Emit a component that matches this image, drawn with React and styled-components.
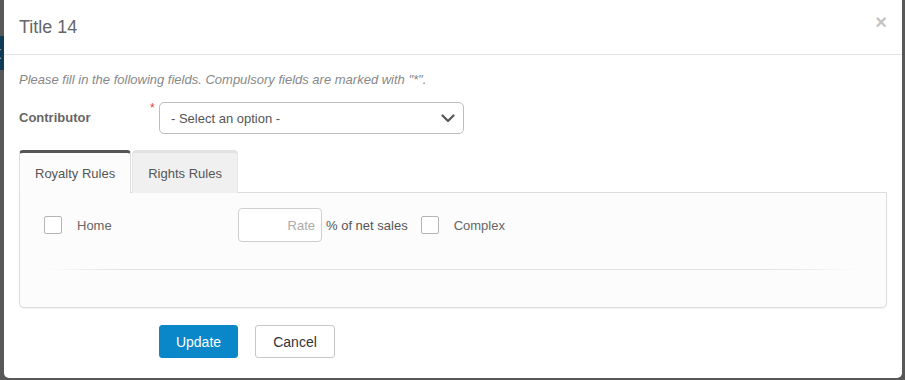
import React from "react";
import styled, { createGlobalStyle } from "styled-components";

const GlobalStyle = createGlobalStyle`
  html, body { margin: 0; padding: 0; background: #595959; }
  body { font-family: "Liberation Sans", Arial, sans-serif; }
`;

const Page = styled.div`
  display: flex;
  width: 905px;
  height: 380px;
  background: #585858;
  overflow: hidden;
`;

const Gutter = styled.div`
  width: 4px;
  flex: none;
  padding-top: 36px;
`;

const BehindBlock = styled.div`
  height: 34px;
  background: #0d3b58;
  color: #9fb3c2;
  font-size: 18px;
  line-height: 34px;
  overflow: hidden;
  text-indent: -4px;
`;

const Modal = styled.div`
  width: 898px;
  height: 378px;
  flex: none;
  background: #fff;
  border-radius: 0 0 5px 5px;
  display: flex;
  flex-direction: column;
`;

const Header = styled.div`
  height: 54px;
  border-bottom: 1px solid #e5e5e5;
  display: flex;
  align-items: center;
  justify-content: space-between;
  padding: 0 15px;
`;

const Title = styled.h3`
  margin: 0;
  font-size: 18px;
  font-weight: normal;
  color: #666;
  padding-top: 1px;
`;

const Close = styled.span`
  font-size: 20px;
  font-weight: bold;
  color: #c4c4c4;
  line-height: 1;
  margin-top: -10px;
`;

const Body = styled.div`
  padding: 17px 15px 0 15px;
`;

const Intro = styled.p`
  margin: 0;
  font-size: 13px;
  font-style: italic;
  color: #888;
  line-height: 16px;
`;

const FieldRow = styled.div`
  display: flex;
  align-items: center;
  margin-top: 14px;
`;

const Label = styled.label`
  width: 131px;
  font-size: 13px;
  font-weight: bold;
  color: #666;
  margin-top: -2px;
`;

const Required = styled.span`
  width: 9px;
  align-self: flex-start;
  color: #e23b3b;
  font-size: 12px;
  margin-top: -1px;
`;

const Select = styled.div`
  width: 284px;
  height: 30px;
  border: 1px solid #bdbdbd;
  border-radius: 5px;
  display: flex;
  align-items: center;
  justify-content: space-between;
  padding: 0 8px 0 11px;
  font-size: 13px;
  color: #555;
`;

const Tabs = styled.div`
  display: flex;
  margin-top: 16px;
  align-items: flex-end;
`;

const Tab = styled.div`
  height: 40px;
  padding: 0 15px;
  display: flex;
  align-items: center;
  font-size: 13px;
  color: #555;
  border-top: 3px solid ${({ $active }) => ($active ? "#555" : "#e2e2e2")};
  border-left: 1px solid ${({ $active }) => ($active ? "#ddd" : "#e6e6e6")};
  border-right: 1px solid ${({ $active }) => ($active ? "#ddd" : "#e6e6e6")};
  border-radius: 4px 4px 0 0;
  background: ${({ $active }) => ($active ? "#fcfcfc" : "#f0f0f0")};
  margin-right: 1px;
  margin-bottom: -1px;
  position: relative;
`;

const Panel = styled.div`
  box-sizing: border-box;
  height: 116px;
  border: 1px solid #dcdcdc;
  border-radius: 0 0 5px 5px;
  background: #fcfcfc;
  padding: 15px 24px 0 24px;
  box-shadow: 0 1px 1px rgba(0, 0, 0, 0.05);
`;

const RuleRow = styled.div`
  display: flex;
  align-items: center;
  height: 34px;
`;

const Checkbox = styled.span`
  width: 16px;
  height: 16px;
  border: 1px solid #b5b5b5;
  border-radius: 2px;
  background: #fff;
  flex: none;
`;

const CheckLabel = styled.span`
  font-size: 13px;
  color: #666;
  margin-left: 15px;
  width: ${({ $w }) => $w}px;
`;

const RateInput = styled.div`
  width: 76px;
  height: 32px;
  border: 1px solid #cfcfcf;
  border-radius: 4px;
  background: #fff;
  display: flex;
  align-items: center;
  justify-content: flex-end;
  padding-right: 6px;
  font-size: 13px;
  color: #aaa;
`;

const Unit = styled.span`
  font-size: 13px;
  color: #555;
  margin: 0 13px 0 4px;
`;

const Divider = styled.div`
  height: 1px;
  margin: 27px 0 0 0;
  background: linear-gradient(
    to right,
    rgba(225, 225, 225, 0),
    #e2e2e2 10%,
    #e2e2e2 88%,
    rgba(225, 225, 225, 0)
  );
`;

const Actions = styled.div`
  display: flex;
  gap: 17px;
  margin: 17px 0 0 140px;
`;

const Button = styled.button`
  height: 33px;
  width: ${({ $w }) => $w}px;
  border-radius: 3px;
  font-family: inherit;
  font-size: 14px;
  border: 1px solid ${({ $primary }) => ($primary ? "#0a87c9" : "#c8c8c8")};
  background: ${({ $primary }) => ($primary ? "#0a87c9" : "#fff")};
  color: ${({ $primary }) => ($primary ? "#fff" : "#333")};
  padding: 0;
`;

const Chevron = () => (
  <svg width="14" height="9" viewBox="0 0 14 9">
    <path d="M1.5 1.5 L7 7 L12.5 1.5" fill="none" stroke="#555" strokeWidth="2.2" strokeLinecap="round" strokeLinejoin="round" />
  </svg>
);

export default function App() {
  return (
    <>
      <GlobalStyle />
      <Page>
        <Gutter>
          <BehindBlock>t</BehindBlock>
        </Gutter>
        <Modal>
          <Header>
            <Title>Title 14</Title>
            <Close>×</Close>
          </Header>
          <Body>
            <Intro>Please fill in the following fields. Compulsory fields are marked with "*".</Intro>
            <FieldRow>
              <Label>Contributor</Label>
              <Required>*</Required>
              <Select>
                <span>- Select an option -</span>
                <Chevron />
              </Select>
            </FieldRow>
            <Tabs>
              <Tab $active>Royalty Rules</Tab>
              <Tab>Rights Rules</Tab>
            </Tabs>
            <Panel>
              <RuleRow>
                <Checkbox />
                <CheckLabel $w={161}>Home</CheckLabel>
                <RateInput>Rate</RateInput>
                <Unit>% of net sales</Unit>
                <Checkbox />
                <CheckLabel $w={80}>Complex</CheckLabel>
              </RuleRow>
              <Divider />
            </Panel>
            <Actions>
              <Button $primary $w={79}>Update</Button>
              <Button $w={80}>Cancel</Button>
            </Actions>
          </Body>
        </Modal>
      </Page>
    </>
  );
}
